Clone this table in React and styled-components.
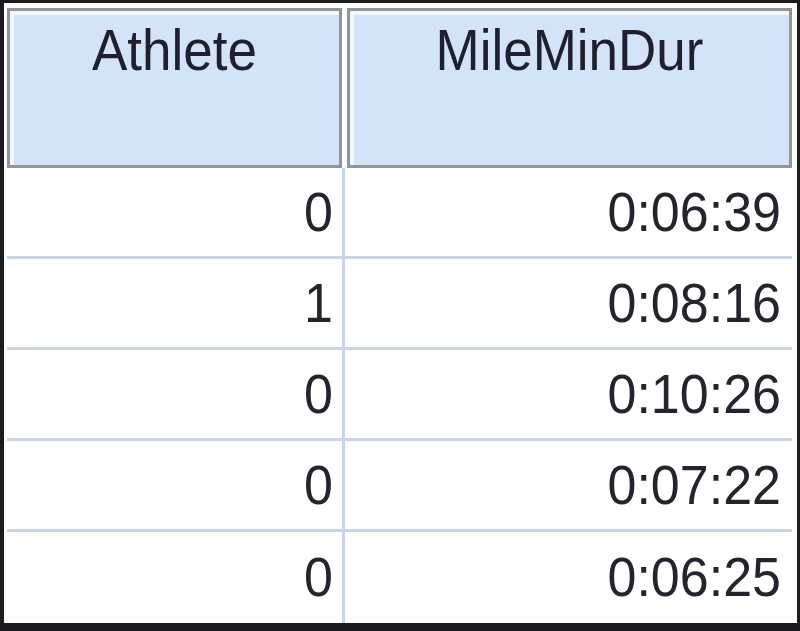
import React from "react";
import styled, { createGlobalStyle } from "styled-components";

const Global = createGlobalStyle`
  html, body { margin: 0; padding: 0; background: #ffffff; }
  body { font-family: "Liberation Sans", Arial, sans-serif; }
`;

const Frame = styled.div`
  box-sizing: border-box;
  width: 800px;
  height: 631px;
  background: #ffffff;
  border-style: solid;
  border-color: #1b1c20;
  border-width: 3px 3px 8px 4px;
  padding: 5px 0 0 3px;
  overflow: hidden;
`;

const Table = styled.div`
  width: 785px;
  display: flex;
  flex-direction: column;
`;

const HeaderRow = styled.div`
  display: flex;
  gap: 5px;
  height: 160px;
`;

const HeaderCell = styled.div`
  box-sizing: border-box;
  width: ${(p) => p.$w}px;
  height: 100%;
  background: #d3e3f8;
  border: 3px solid #8e959d;
  box-shadow: inset 4px 4px 0 #f4f8fd;
  padding-top: 9px;
  text-align: center;
  font-size: 53px;
  line-height: 62px;
  color: #1f1f30;
`;

const Label = styled.span`
  display: inline-block;
  transform: scaleY(1.08);
`;

const Row = styled.div`
  display: flex;
  height: 91px;
  box-sizing: border-box;
  border-bottom: ${(p) => (p.$last ? "none" : "3px solid #c9d5e4")};
`;

const Cell = styled.div`
  box-sizing: border-box;
  width: ${(p) => p.$w}px;
  display: flex;
  align-items: center;
  justify-content: flex-end;
  padding: 0 ${(p) => p.$pr}px 1px 0;
  border-right: ${(p) => (p.$divider ? "3px solid #c9d5e4" : "none")};
  font-size: 52px;
  line-height: 62px;
  color: #24242e;
`;

const Value = styled.span`
  display: inline-block;
  transform: scaleY(1.08);
`;

const rows = [
  ["0", "0:06:39"],
  ["1", "0:08:16"],
  ["0", "0:10:26"],
  ["0", "0:07:22"],
  ["0", "0:06:25"],
];

export default function App() {
  return (
    <>
      <Global />
      <Frame>
        <Table>
          <HeaderRow>
            <HeaderCell $w={335}>
              <Label>Athlete</Label>
            </HeaderCell>
            <HeaderCell $w={445}>
              <Label>MileMinDur</Label>
            </HeaderCell>
          </HeaderRow>
          {rows.map((r, i) => (
            <Row key={i} $last={i === rows.length - 1}>
              <Cell $w={338} $pr={9} $divider>
                <Value>{r[0]}</Value>
              </Cell>
              <Cell $w={447} $pr={11}>
                <Value>{r[1]}</Value>
              </Cell>
            </Row>
          ))}
        </Table>
      </Frame>
    </>
  );
}
